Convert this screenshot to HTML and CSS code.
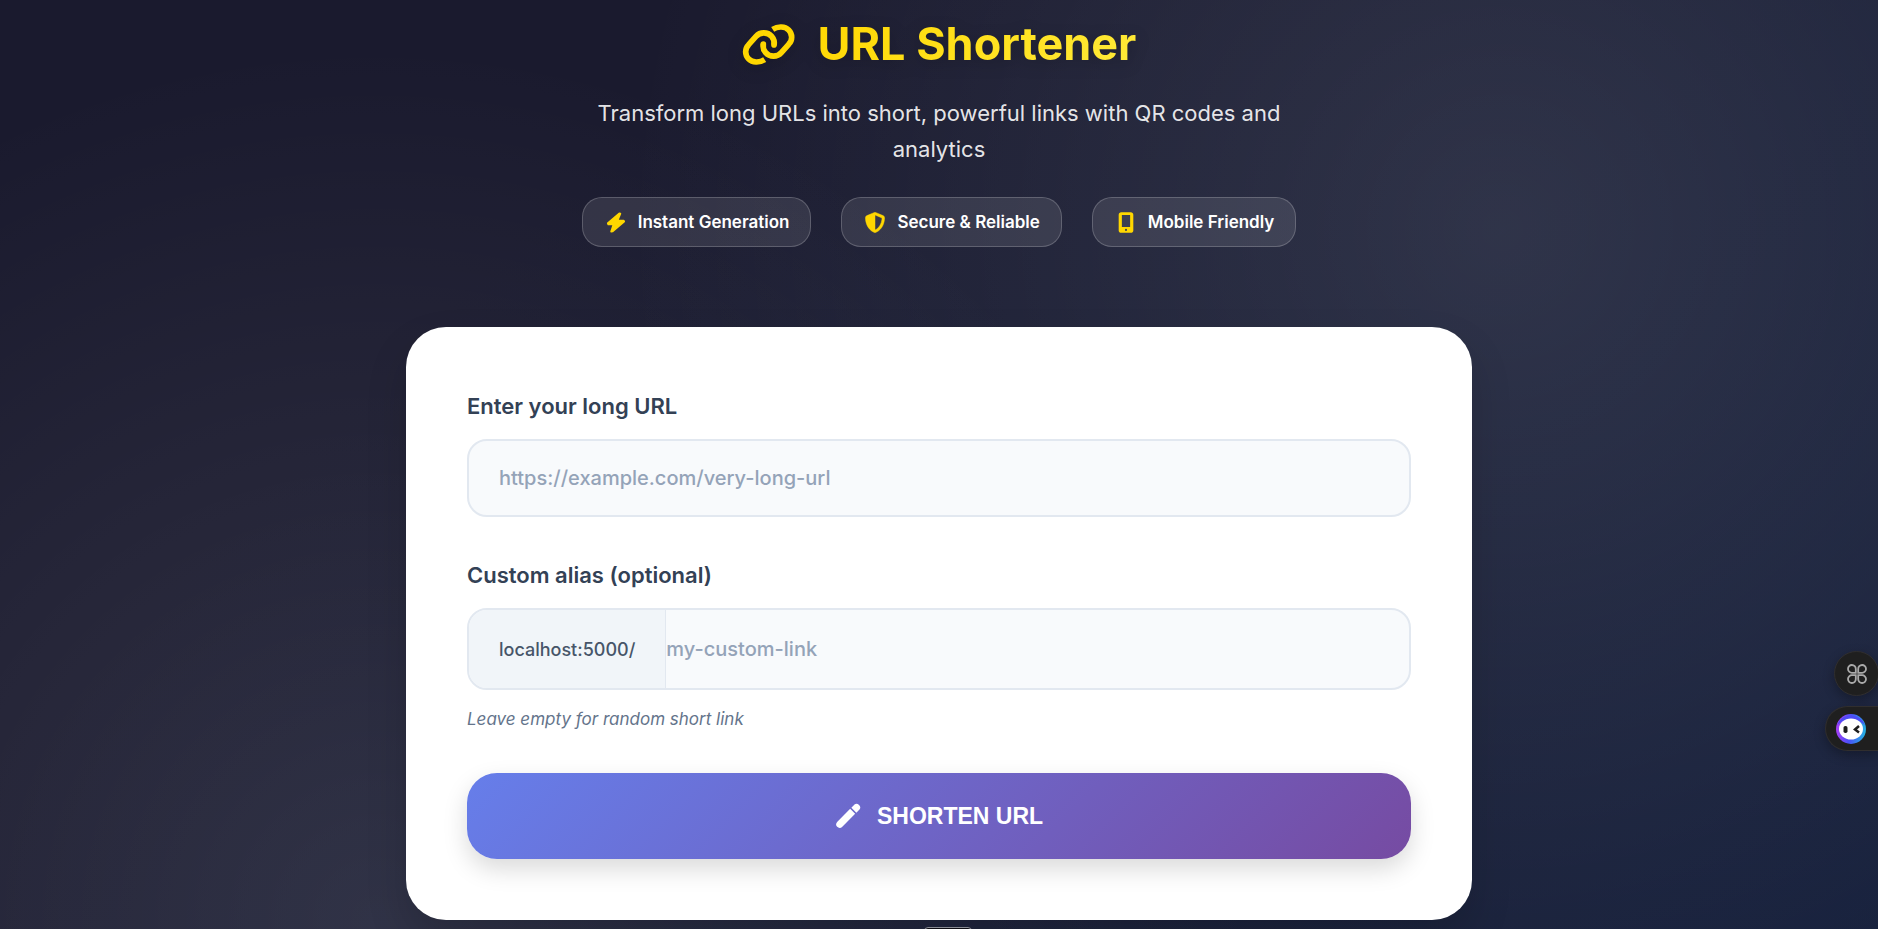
FILE: index.html
```html
<!DOCTYPE html>
<html lang="en">
<head>
<meta charset="utf-8">
<title>URL Shortener</title>
<meta name="viewport" content="width=device-width, initial-scale=1">
<link rel="stylesheet" href="styles.css">
</head>
<body>
<div class="page">
  <header class="hero">
    <h1 class="title">
      <svg class="title-icon" viewBox="20 26 162 129" fill="none" stroke="#ffd700" stroke-width="17" aria-hidden="true"><path d="M88 136C72 146 51 145 40 134 28 122 28 103 40 91L62 66C74 52 97 52 109 66 116 74 118 83 116 92"/><path d="M112 45C128 35 149 36 160 47 172 59 172 78 160 90L138 115C126 129 103 129 91 115 84 107 82 98 84 89"/><path d="M116 92v.1M84 89v.1" stroke-linecap="round"/></svg>
      <span class="title-text">URL Shortener</span>
    </h1>
    <p class="subtitle">Transform long URLs into short, powerful links with QR codes and analytics</p>
    <ul class="features">
      <li class="feature">
        <svg class="feature-icon" viewBox="0 0 24 22" fill="#ffd700" stroke="#ffd700" stroke-width="2" stroke-linejoin="round" aria-hidden="true"><path d="M15.500 1.500 3.500 11.800 4 13H9.500L7 20.500 8.500 20.300 20.500 10 20 9H13.500L16.500 1.800Z"/></svg>
        <span>Instant Generation</span>
      </li>
      <li class="feature">
        <svg class="feature-icon" viewBox="-8 -8 528 528" fill="#ffd700" stroke="#ffd700" stroke-width="12" aria-hidden="true"><path d="M256 0c4.600 0 9.200 1 13.400 2.900L457.700 82.800c22 9.300 38.400 31 38.300 57.200-.5 99.200-41.300 280.700-213.600 363.200-16.700 8-36.100 8-52.800 0C57.300 420.700 16.500 239.200 16 140c-.1-26.200 16.300-47.900 38.300-57.200L242.700 2.900C246.800 1 251.400 0 256 0zm0 66.800v378.100C394 378 431.100 230.100 432 141.400z"/></svg>
        <span>Secure &amp; Reliable</span>
      </li>
      <li class="feature">
        <svg class="feature-icon" viewBox="0 0 384 528" fill="#ffd700" aria-hidden="true"><path fill-rule="evenodd" d="M8 66C8 32 36 4 72 4h240c36 0 64 28 64 62v396c0 34-28 62-64 62H72c-36 0-64-28-64-62zm210 384a26 26 0 1 0-52 0 26 26 0 1 0 52 0M296 76H88v304h208z"/></svg>
        <span>Mobile Friendly</span>
      </li>
    </ul>
  </header>
  <main class="card">
    <form class="form">
      <div class="field">
        <label class="label" for="long-url">Enter your long URL</label>
        <input class="input" id="long-url" type="url" placeholder="https://example.com/very-long-url">
      </div>
      <div class="field">
        <label class="label" for="alias">Custom alias (optional)</label>
        <div class="input-group">
          <span class="prefix">localhost:5000/</span>
          <input class="alias-input" id="alias" type="text" placeholder="my-custom-link" aria-describedby="alias-hint">
        </div>
        <small class="hint" id="alias-hint">Leave empty for random short link</small>
      </div>
      <button class="submit" type="button">
        <svg class="submit-icon" viewBox="0 0 24 24" fill="#fff" aria-hidden="true"><path d="M14 5.400 18.600 10 7 21.600Q4.400 24.200 2 22-.2 19.600 2.400 17ZM15.100 4.300 18 1.400Q20-.3 22.200 1.800 24.300 4 22.600 6L19.700 8.900Z"/></svg>
        <span>SHORTEN URL</span>
      </button>
    </form>
  </main>
</div>
<div class="hover-tab"></div>
<aside class="dock">
  <button class="dock-apps" type="button" aria-label="Apps">
    <svg class="apps-icon" viewBox="0 0 20 20" fill="none" stroke="#aaa" stroke-width="1.800" aria-hidden="true"><path d="M8.800 8.800H5A3.900 3.900 0 1 1 8.800 5ZM11.200 8.800V5A3.900 3.900 0 1 1 15 8.800ZM8.800 11.200V15A3.900 3.900 0 1 1 5 11.200ZM11.200 11.200H15A3.900 3.900 0 1 1 11.200 15Z"/></svg>
  </button>
  <button class="dock-bot" type="button" aria-label="Assistant">
    <svg class="bot-icon" viewBox="0 0 30 30" aria-hidden="true">
      <defs><linearGradient id="ring" x1="0" y1=".6" x2="1" y2=".7"><stop offset="0" stop-color="#a63df5"/><stop offset=".45" stop-color="#4a50fa"/><stop offset="1" stop-color="#22b5e0"/></linearGradient></defs>
      <circle cx="15" cy="15" r="15" fill="url(#ring)"/>
      <path d="M1 11A15 15 0 0 1 29 11Q15-1 1 11" fill="#4d4cf5"/>
      <ellipse cx="15" cy="15" rx="12" ry="10.500" fill="#fff"/>
      <rect x="7.500" y="12" width="4" height="7" rx="1.800" fill="#1d1d1d"/>
      <path d="m23 12-4 3.500 4 3" fill="none" stroke="#1d1d1d" stroke-width="2.500"/>
    </svg>
  </button>
</aside>
</body>
</html>
```
FILE: styles.css
```css
* {
  box-sizing: border-box;
  margin: 0;
  padding: 0;
}

html {
  overflow: hidden;
}

body {
  font-family: Inter, "Liberation Sans", sans-serif;
  color: #fff;
  background:
    radial-gradient(circle at 20% 80%, rgba(255, 255, 255, 0.1), transparent 50%),
    radial-gradient(circle at 80% 20%, rgba(255, 255, 255, 0.1), transparent 50%),
    linear-gradient(135deg, #1a1a2e 0%, #1a1a2e 25%, #16213e 100%);
}

.page {
  max-width: 1114px;
  margin: 0 auto;
  padding: 8px 24px 230px;
}

.hero {
  display: flex;
  flex-direction: column;
  align-items: center;
  padding-bottom: 80px;
}

.title {
  display: flex;
  align-items: center;
  gap: 22px;
  font-size: 45px;
  line-height: 72px;
  font-weight: 700;
  filter: drop-shadow(0 4px 8px rgba(0, 0, 0, 0.2));
}

.title-icon {
  width: 54px;
  height: 43px;
}

.title-text {
  color: transparent;
  background: linear-gradient(135deg, #ffd700, #ffeb3b);
  -webkit-background-clip: text;
  background-clip: text;
}

.subtitle {
  max-width: 700px;
  margin: 15px 0 30px;
  font-size: 22px;
  line-height: 36px;
  font-weight: 400;
  text-align: center;
  color: rgba(255, 255, 255, 0.9);
}

.features {
  display: flex;
  flex-wrap: wrap;
  justify-content: center;
  gap: 30px;
  list-style: none;
}

.feature {
  display: flex;
  align-items: center;
  gap: 10px;
  padding: 10px 21px;
  border: 1px solid rgba(255, 255, 255, 0.2);
  border-radius: 20px;
  background: rgba(255, 255, 255, 0.1);
  font-size: 17px;
  line-height: 28px;
  font-weight: 600;
}

.feature-icon {
  width: 24px;
  height: 21px;
}

.card {
  padding: 61px;
  border-radius: 40px;
  background: #fff;
  box-shadow: 0 20px 40px rgba(0, 0, 0, 0.15);
}

.form {
  display: flex;
  flex-direction: column;
  gap: 40px;
}

.field {
  display: flex;
  flex-direction: column;
}

.label {
  margin-bottom: 14px;
  font-size: 22px;
  line-height: 37px;
  font-weight: 600;
  color: #334155;
}

.input,
.alias-input {
  font: 500 20px/24px Inter, "Liberation Sans", sans-serif;
  color: #334155;
  outline: none;
}

.input::placeholder,
.alias-input::placeholder {
  color: #94a3b8;
  opacity: 1;
}

.input {
  width: 100%;
  height: 78px;
  padding: 0 30px;
  border: 2px solid #e2e8f0;
  border-radius: 20px;
  background: #f8fafc;
}

.input-group {
  display: flex;
  height: 82px;
  border: 2px solid #e2e8f0;
  border-radius: 20px;
  background: #f8fafc;
  overflow: hidden;
}

.prefix {
  display: flex;
  align-items: center;
  padding: 0 30px;
  border-right: 1px solid #e2e8f0;
  background: #f1f5f9;
  font-size: 18px;
  font-weight: 500;
  color: #475569;
}

.alias-input {
  flex: 1;
  min-width: 0;
  border: 0;
  background: transparent;
}

.hint {
  margin-top: 15px;
  font-size: 17px;
  line-height: 28px;
  font-style: italic;
  color: #64748b;
}

.submit {
  display: flex;
  align-items: center;
  justify-content: center;
  gap: 16px;
  height: 86px;
  border: 0;
  border-radius: 30px;
  background: linear-gradient(135deg, #667eea, #764ba2);
  box-shadow: 0 10px 25px rgba(0, 0, 0, 0.15);
  color: #fff;
  font: 700 23px/30px "Liberation Sans", Arial, sans-serif;
}

.submit-icon {
  width: 26px;
  height: 26px;
}

.hover-tab {
  position: fixed;
  left: 50%;
  bottom: -18px;
  width: 48px;
  height: 20px;
  margin-left: -15px;
  border: 1px solid #8a8c94;
  border-radius: 4px;
  background: #0c0c12;
}

.dock {
  position: fixed;
  right: 0;
  bottom: 178px;
  display: flex;
  flex-direction: column;
  align-items: flex-end;
  gap: 10px;
}

.dock-apps,
.dock-bot {
  display: flex;
  align-items: center;
  height: 45px;
  border: 1px solid #302e2e;
  background: #1f1f1f;
  box-shadow: 0 4px 12px rgba(0, 0, 0, 0.3);
}

.dock-apps {
  justify-content: center;
  width: 45px;
  margin-right: -1px;
  border-radius: 50%;
}

.apps-icon {
  width: 20px;
  height: 20px;
}

.dock-bot {
  width: 53px;
  padding-left: 10px;
  border-right: 0;
  border-radius: 23px 0 0 23px;
}

.bot-icon {
  width: 30px;
  height: 30px;
}
```
